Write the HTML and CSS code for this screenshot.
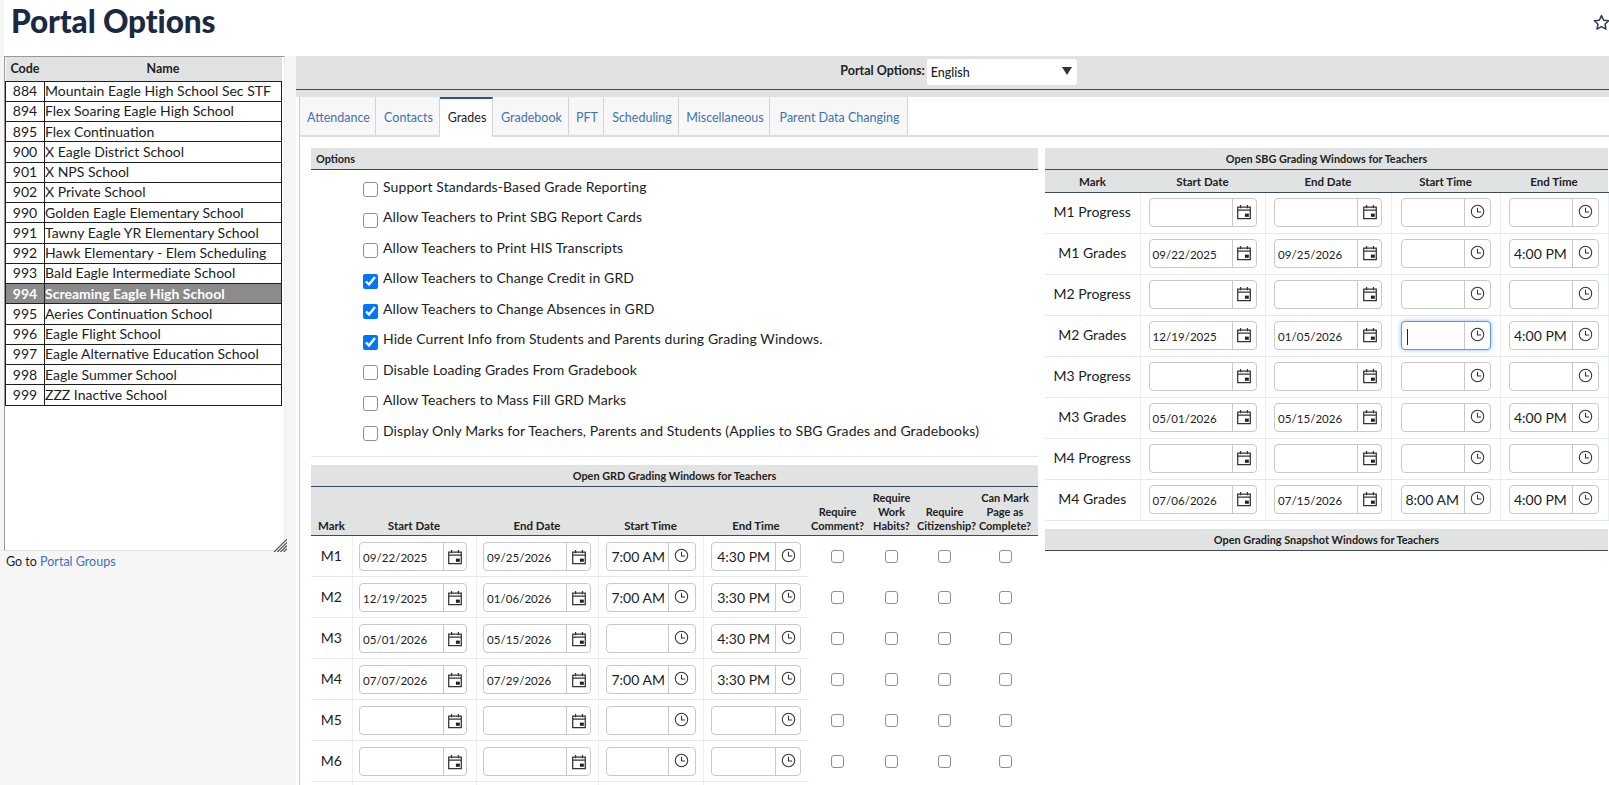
FILE: index.html
```html
<!DOCTYPE html>
<html lang="en">
<head>
<meta charset="utf-8">
<title>Portal Options</title>
<link rel="stylesheet" href="styles.css">
</head>
<body>
<svg class="defs" aria-hidden="true">
  <symbol id="cal" viewBox="0 0 14 14"><path d="M1.500 2.800h11v10h-11zM1.500 5.400h11M4 .8v3M10 .8v3" fill="none" stroke="#333" stroke-width="1.100"/><rect x="7.800" y="8.400" width="3.400" height="2.800" fill="#222"/></symbol>
  <symbol id="clk" viewBox="0 0 14 14"><circle cx="7" cy="7" r="5.800" fill="none" stroke="#333" stroke-width="1"/><path d="M7 3.400V7.400H10.400" fill="none" stroke="#333" stroke-width="1"/></symbol>
</svg>
<header class="top">
  <h1>Portal Options</h1>
  <svg class="star" viewBox="0 0 16 16" aria-hidden="true"><path d="M8 1.500l2 4.300 4.700.6-3.400 3.200.9 4.700L8 11.900l-4.200 2.400.9-4.700L1.300 6.400l4.700-.6z" fill="none" stroke="#2b3a52" stroke-width="1.400" stroke-linejoin="round"/></svg>
</header>
<div class="page">
  <aside class="side">
    <div class="listbox">
      <table class="schools">
        <colgroup><col class="c-code"><col></colgroup>
        <thead><tr><th>Code</th><th>Name</th></tr></thead>
        <tbody>
          <tr><td>884</td><td>Mountain Eagle High School Sec STF</td></tr>
          <tr><td>894</td><td>Flex Soaring Eagle High School</td></tr>
          <tr><td>895</td><td>Flex Continuation</td></tr>
          <tr><td>900</td><td>X Eagle District School</td></tr>
          <tr><td>901</td><td>X NPS School</td></tr>
          <tr><td>902</td><td>X Private School</td></tr>
          <tr><td>990</td><td>Golden Eagle Elementary School</td></tr>
          <tr><td>991</td><td>Tawny Eagle YR Elementary School</td></tr>
          <tr><td>992</td><td>Hawk Elementary - Elem Scheduling</td></tr>
          <tr><td>993</td><td>Bald Eagle Intermediate School</td></tr>
          <tr class="sel"><td>994</td><td>Screaming Eagle High School</td></tr>
          <tr><td>995</td><td>Aeries Continuation School</td></tr>
          <tr><td>996</td><td>Eagle Flight School</td></tr>
          <tr><td>997</td><td>Eagle Alternative Education School</td></tr>
          <tr><td>998</td><td>Eagle Summer School</td></tr>
          <tr><td>999</td><td>ZZZ Inactive School</td></tr>
        </tbody>
      </table>
      <svg class="grip" viewBox="0 0 13 13" aria-hidden="true"><path d="M13 1L1 13M13 4L4 13M13 7L7 13M13 10L10 13" stroke="#555" stroke-width="1.100"/></svg>
    </div>
    <p class="goto">Go to <a href="#">Portal Groups</a></p>
  </aside>
  <main class="main">
    <div class="langbar">
      <label class="langlabel">Portal Options:</label>
      <span class="select">English<i class="arrow"></i></span>
    </div>
    <div class="content">
      <nav class="tabs">
        <a class="tab t1" href="#">Attendance</a><a class="tab t2" href="#">Contacts</a><a class="tab t3 on" href="#">Grades</a><a class="tab t4" href="#">Gradebook</a><a class="tab t5" href="#">PFT</a><a class="tab t6" href="#">Scheduling</a><a class="tab t7" href="#">Miscellaneous</a><a class="tab t8" href="#">Parent Data Changing</a>
      </nav>
      <div class="panels">
        <section class="left">
          <h2 class="bar barleft">Options</h2>
          <div class="opts">
            <label class="opt"><input type="checkbox"><span>Support Standards-Based Grade Reporting</span></label>
            <label class="opt"><input type="checkbox"><span>Allow Teachers to Print SBG Report Cards</span></label>
            <label class="opt"><input type="checkbox"><span>Allow Teachers to Print HIS Transcripts</span></label>
            <label class="opt"><input type="checkbox" checked><span>Allow Teachers to Change Credit in GRD</span></label>
            <label class="opt"><input type="checkbox" checked><span>Allow Teachers to Change Absences in GRD</span></label>
            <label class="opt"><input type="checkbox" checked><span>Hide Current Info from Students and Parents during Grading Windows.</span></label>
            <label class="opt"><input type="checkbox"><span>Disable Loading Grades From Gradebook</span></label>
            <label class="opt"><input type="checkbox"><span>Allow Teachers to Mass Fill GRD Marks</span></label>
            <label class="opt"><input type="checkbox"><span>Display Only Marks for Teachers, Parents and Students (Applies to SBG Grades and Gradebooks)</span></label>
          </div>
          <hr class="rule">
          <h2 class="bar">Open GRD Grading Windows for Teachers</h2>
          <table class="grid grd">
            <colgroup><col class="g1"><col class="g2"><col class="g3"><col class="g4"><col class="g5"><col class="g6"><col class="g7"><col class="g8"><col class="g9"></colgroup>
            <thead><tr><th>Mark</th><th>Start Date</th><th>End Date</th><th>Start Time</th><th>End Time</th><th>Require Comment?</th><th>Require Work Habits?</th><th>Require Citizenship?</th><th>Can Mark Page as Complete?</th></tr></thead>
            <tbody>
              <tr><td>M1</td><td><span class="f fd"><b>09/22/2025</b><i><svg><use href="#cal"/></svg></i></span></td><td><span class="f fe"><b>09/25/2026</b><i><svg><use href="#cal"/></svg></i></span></td><td><span class="f fs"><b>7:00 AM</b><i><svg><use href="#clk"/></svg></i></span></td><td><span class="f ft"><b>4:30 PM</b><i><svg><use href="#clk"/></svg></i></span></td><td class="cb"><input type="checkbox"></td><td class="cb"><input type="checkbox"></td><td class="cb"><input type="checkbox"></td><td class="cb"><input type="checkbox"></td></tr>
              <tr><td>M2</td><td><span class="f fd"><b>12/19/2025</b><i><svg><use href="#cal"/></svg></i></span></td><td><span class="f fe"><b>01/06/2026</b><i><svg><use href="#cal"/></svg></i></span></td><td><span class="f fs"><b>7:00 AM</b><i><svg><use href="#clk"/></svg></i></span></td><td><span class="f ft"><b>3:30 PM</b><i><svg><use href="#clk"/></svg></i></span></td><td class="cb"><input type="checkbox"></td><td class="cb"><input type="checkbox"></td><td class="cb"><input type="checkbox"></td><td class="cb"><input type="checkbox"></td></tr>
              <tr><td>M3</td><td><span class="f fd"><b>05/01/2026</b><i><svg><use href="#cal"/></svg></i></span></td><td><span class="f fe"><b>05/15/2026</b><i><svg><use href="#cal"/></svg></i></span></td><td><span class="f fs"><b></b><i><svg><use href="#clk"/></svg></i></span></td><td><span class="f ft"><b>4:30 PM</b><i><svg><use href="#clk"/></svg></i></span></td><td class="cb"><input type="checkbox"></td><td class="cb"><input type="checkbox"></td><td class="cb"><input type="checkbox"></td><td class="cb"><input type="checkbox"></td></tr>
              <tr><td>M4</td><td><span class="f fd"><b>07/07/2026</b><i><svg><use href="#cal"/></svg></i></span></td><td><span class="f fe"><b>07/29/2026</b><i><svg><use href="#cal"/></svg></i></span></td><td><span class="f fs"><b>7:00 AM</b><i><svg><use href="#clk"/></svg></i></span></td><td><span class="f ft"><b>3:30 PM</b><i><svg><use href="#clk"/></svg></i></span></td><td class="cb"><input type="checkbox"></td><td class="cb"><input type="checkbox"></td><td class="cb"><input type="checkbox"></td><td class="cb"><input type="checkbox"></td></tr>
              <tr><td>M5</td><td><span class="f fd"><b></b><i><svg><use href="#cal"/></svg></i></span></td><td><span class="f fe"><b></b><i><svg><use href="#cal"/></svg></i></span></td><td><span class="f fs"><b></b><i><svg><use href="#clk"/></svg></i></span></td><td><span class="f ft"><b></b><i><svg><use href="#clk"/></svg></i></span></td><td class="cb"><input type="checkbox"></td><td class="cb"><input type="checkbox"></td><td class="cb"><input type="checkbox"></td><td class="cb"><input type="checkbox"></td></tr>
              <tr><td>M6</td><td><span class="f fd"><b></b><i><svg><use href="#cal"/></svg></i></span></td><td><span class="f fe"><b></b><i><svg><use href="#cal"/></svg></i></span></td><td><span class="f fs"><b></b><i><svg><use href="#clk"/></svg></i></span></td><td><span class="f ft"><b></b><i><svg><use href="#clk"/></svg></i></span></td><td class="cb"><input type="checkbox"></td><td class="cb"><input type="checkbox"></td><td class="cb"><input type="checkbox"></td><td class="cb"><input type="checkbox"></td></tr>
              <tr><td></td><td></td><td></td><td></td><td></td><td></td><td></td><td></td><td></td></tr>
            </tbody>
          </table>
        </section>
        <section class="right">
          <h2 class="bar">Open SBG Grading Windows for Teachers</h2>
          <table class="grid sbg">
            <colgroup><col class="s1"><col class="s2"><col class="s3"><col class="s4"><col class="s5"></colgroup>
            <thead><tr><th>Mark</th><th>Start Date</th><th>End Date</th><th>Start Time</th><th>End Time</th></tr></thead>
            <tbody>
              <tr><td>M1 Progress</td><td><span class="f sd"><b></b><i><svg><use href="#cal"/></svg></i></span></td><td><span class="f sd"><b></b><i><svg><use href="#cal"/></svg></i></span></td><td><span class="f st"><b></b><i><svg><use href="#clk"/></svg></i></span></td><td><span class="f st"><b></b><i><svg><use href="#clk"/></svg></i></span></td></tr>
              <tr><td>M1 Grades</td><td><span class="f sd"><b>09/22/2025</b><i><svg><use href="#cal"/></svg></i></span></td><td><span class="f sd"><b>09/25/2026</b><i><svg><use href="#cal"/></svg></i></span></td><td><span class="f st"><b></b><i><svg><use href="#clk"/></svg></i></span></td><td><span class="f st"><b>4:00 PM</b><i><svg><use href="#clk"/></svg></i></span></td></tr>
              <tr><td>M2 Progress</td><td><span class="f sd"><b></b><i><svg><use href="#cal"/></svg></i></span></td><td><span class="f sd"><b></b><i><svg><use href="#cal"/></svg></i></span></td><td><span class="f st"><b></b><i><svg><use href="#clk"/></svg></i></span></td><td><span class="f st"><b></b><i><svg><use href="#clk"/></svg></i></span></td></tr>
              <tr><td>M2 Grades</td><td><span class="f sd"><b>12/19/2025</b><i><svg><use href="#cal"/></svg></i></span></td><td><span class="f sd"><b>01/05/2026</b><i><svg><use href="#cal"/></svg></i></span></td><td><span class="f st focus"><b><s class="caret"></s></b><i><svg><use href="#clk"/></svg></i></span></td><td><span class="f st"><b>4:00 PM</b><i><svg><use href="#clk"/></svg></i></span></td></tr>
              <tr><td>M3 Progress</td><td><span class="f sd"><b></b><i><svg><use href="#cal"/></svg></i></span></td><td><span class="f sd"><b></b><i><svg><use href="#cal"/></svg></i></span></td><td><span class="f st"><b></b><i><svg><use href="#clk"/></svg></i></span></td><td><span class="f st"><b></b><i><svg><use href="#clk"/></svg></i></span></td></tr>
              <tr><td>M3 Grades</td><td><span class="f sd"><b>05/01/2026</b><i><svg><use href="#cal"/></svg></i></span></td><td><span class="f sd"><b>05/15/2026</b><i><svg><use href="#cal"/></svg></i></span></td><td><span class="f st"><b></b><i><svg><use href="#clk"/></svg></i></span></td><td><span class="f st"><b>4:00 PM</b><i><svg><use href="#clk"/></svg></i></span></td></tr>
              <tr><td>M4 Progress</td><td><span class="f sd"><b></b><i><svg><use href="#cal"/></svg></i></span></td><td><span class="f sd"><b></b><i><svg><use href="#cal"/></svg></i></span></td><td><span class="f st"><b></b><i><svg><use href="#clk"/></svg></i></span></td><td><span class="f st"><b></b><i><svg><use href="#clk"/></svg></i></span></td></tr>
              <tr><td>M4 Grades</td><td><span class="f sd"><b>07/06/2026</b><i><svg><use href="#cal"/></svg></i></span></td><td><span class="f sd"><b>07/15/2026</b><i><svg><use href="#cal"/></svg></i></span></td><td><span class="f st"><b>8:00 AM</b><i><svg><use href="#clk"/></svg></i></span></td><td><span class="f st"><b>4:00 PM</b><i><svg><use href="#clk"/></svg></i></span></td></tr>
            </tbody>
          </table>
          <h2 class="bar snap">Open Grading Snapshot Windows for Teachers</h2>
        </section>
      </div>
    </div>
  </main>
</div>
</body>
</html>
```

FILE: styles.css
```css
* { box-sizing: border-box; }
html, body { margin: 0; height: 785px; overflow: hidden; }
body {
  background: #fff;
  color: #1a1d24;
  font-family: Lato, "Noto Sans", sans-serif;
  font-size: 14px;
  border-left: 4px solid #f5f5f5;
}
.defs { position: absolute; width: 0; height: 0; }

.top { height: 56px; display: flex; justify-content: space-between; }
.top h1 { margin: 2px 0 0 7px; font-size: 31.5px; line-height: 38px; font-weight: 900; color: #1b2a41; letter-spacing: -.1px; }
.star { width: 17px; height: 17px; margin: 14px -1px 0 0; }

.page { display: flex; height: 729px; margin-left: -4px; }

.side { width: 296px; flex: none; background: #f5f5f5; padding-left: 4px; }
.listbox {
  position: relative;
  width: 281px; height: 495px;
  background: #fff;
  border-top: 1px solid #999;
  border-left: 1px solid #999;
  border-bottom: 1px solid #e3e3e3;
  border-right: 1px solid #eee;
}
.schools { border-collapse: collapse; table-layout: fixed; width: 277px; font-size: 14px; }
.c-code { width: 39px; }
.schools th { height: 24px; background: #e1e3e3; font-size: 12.5px; font-weight: 700; padding: 0; color: #222; }
.schools td { height: 20.25px; border: 1px solid #1e1e1e; padding: 0; line-height: 18px; white-space: nowrap; }
.schools td:first-child { text-align: center; }
.schools .sel td { background: #8b8b8b; color: #fff; font-weight: 700; }
.grip { position: absolute; right: -3px; bottom: -2px; width: 14px; height: 14px; }
.goto { margin: 3px 0 0 2px; font-size: 12.5px; line-height: 16px; }
a { color: #3f72b5; text-decoration: none; }

.main { flex: 1; min-width: 0; }
.langbar {
  height: 41px;
  background: linear-gradient(#e1e3e3 33px, #3c4a66 33px, #3c4a66 34px, #e1e3e3 34px);
  display: flex; align-items: flex-start; justify-content: center;
  gap: 2px;
  padding: 3px 0 0 12px;
}
.langlabel { font-size: 12.5px; font-weight: 700; line-height: 24px; color: #222; }
.select {
  position: relative;
  width: 150px; height: 26px;
  background: #fff; border-radius: 3px;
  font-size: 12.5px; line-height: 28px; padding-left: 4px; font-weight: 500;
}
.arrow { position: absolute; right: 5px; top: 8px; border: 5.5px solid transparent; border-top: 8px solid #333; border-bottom: 0; }

.content { margin-left: 3px; border-left: 1px solid #ccc; height: 688px; overflow: hidden; }
.tabs { display: flex; height: 40px; border-bottom: 2px solid #ddd; margin-bottom: 11px; background: #fff; }
.tab {
  height: 38px; padding: 3px 0 0 2px; border-right: 1px solid #d4d4d4;
  background: #f7f7f7; font-size: 12.5px; line-height: 35px; text-align: center; flex: none;
}
.t1 { width: 76px; } .t2 { width: 64px; } .t3 { width: 53px; } .t4 { width: 76px; }
.t5 { width: 35px; } .t6 { width: 75px; } .t7 { width: 91px; } .t8 { width: 138px; }
.tab.on { background: #fff; color: #1a1d24; border-top: 2px solid #2b4ea0; padding-top: 1px; height: 40px; }

.panels { display: grid; grid-template-columns: 727px 563px; column-gap: 7px; padding-left: 11px; }

.bar {
  margin: 0; height: 22px; background: #e1e3e3; border-bottom: 1px solid #3c4a66;
  font-size: 10.9px; line-height: 21px; font-weight: 700; text-align: center; color: #222;
}
.barleft { text-align: left; padding-left: 5px; }

.opts { display: flex; flex-direction: column; padding-top: 3px; }
.opt { height: 30.5px; display: flex; align-items: center; gap: 5px; padding-left: 52px; }
.opt input { margin: 3px 0 0; width: 15px; height: 15px; flex: none; }
.opt span { line-height: 18px; margin-top: -3px; letter-spacing: .09px; }
.rule { margin: 8px 0 8px; border: 0; border-top: 1px solid #e6e6e6; }

input[type="checkbox"]:not(:checked) {
  appearance: none;
  background: #fff;
  border: 1px solid #8f8f8f;
  border-radius: 3px;
}

.grid { border-collapse: collapse; table-layout: fixed; width: 100%; }
.grid th {
  background: #e1e3e3; border-bottom: 1px solid #3c4a66;
  font-size: 11.5px; line-height: 14px; font-weight: 700; padding: 0 0 2px; vertical-align: bottom; text-align: center; color: #222;
}
.grd th { height: 49px; }
.grd th:nth-child(n+6) { font-size: 11px; }
.sbg th { height: 22px; padding-bottom: 3px; }
.grid td { height: 41px; padding: 0; text-align: center; border-bottom: 1px solid #e4e8ea; border-right: 1px solid #eaf0f3; white-space: nowrap; }
.grid td:first-child { padding-bottom: 2px; }
.grd td:nth-child(n+5) { border-right: 0; }
.grd td.cb { border-bottom: 0; padding-bottom: 3px; }
.cb input { width: 13px; height: 13px; margin: 0; vertical-align: middle; }

.g1 { width: 41px; } .g2 { width: 124px; } .g3 { width: 122px; } .g4 { width: 105px; }
.g5 { width: 106px; } .g6 { width: 57px; } .g7 { width: 51px; } .g8 { width: 55px; } .g9 { width: 66px; }
.s1 { width: 95px; } .s2 { width: 125px; } .s3 { width: 126px; } .s4 { width: 109px; } .s5 { width: 108px; }

.f {
  display: inline-flex; height: 29px; vertical-align: middle; margin-top: -1px; text-align: left;
  border: 1px solid #c9c9c9; border-radius: 4px; background: #fff;
}
.grd .f { margin-top: 1px; }
.f b { flex: 1; min-width: 0; font-weight: 400; line-height: 27px; }
.f i { flex: none; width: 24px; border-left: 1px solid #c9c9c9; display: flex; align-items: center; justify-content: center; }
.f svg { width: 16px; height: 16px; }
.fd { width: 108px; margin-right: 2px; } .fe { width: 108px; } .fs { width: 90px; } .ft { width: 90px; }
.sd { width: 108px; } .st { width: 90px; }
.fd i { width: 23px; }
.fs i { width: 27px; } .ft i { width: 25px; } .st i { width: 26px; }
.fs svg, .ft svg, .st svg { margin-top: -2px; width: 15px; height: 15px; }
.fd b, .fe b, .sd b { font-size: 11.5px; line-height: 30px; letter-spacing: .05px; padding-left: 3px; }
.fs b, .ft b, .st b { font-size: 14px; padding-left: 4px; }
.fs b, .ft b { padding-left: 5px; }
.focus { border-color: #5b9bdc; box-shadow: 0 0 4px rgba(60,140,230,.6); }
.caret { display: inline-block; width: 1px; height: 16px; background: #222; vertical-align: middle; margin-left: 1px; }

.snap { margin-top: 8px; }
```
